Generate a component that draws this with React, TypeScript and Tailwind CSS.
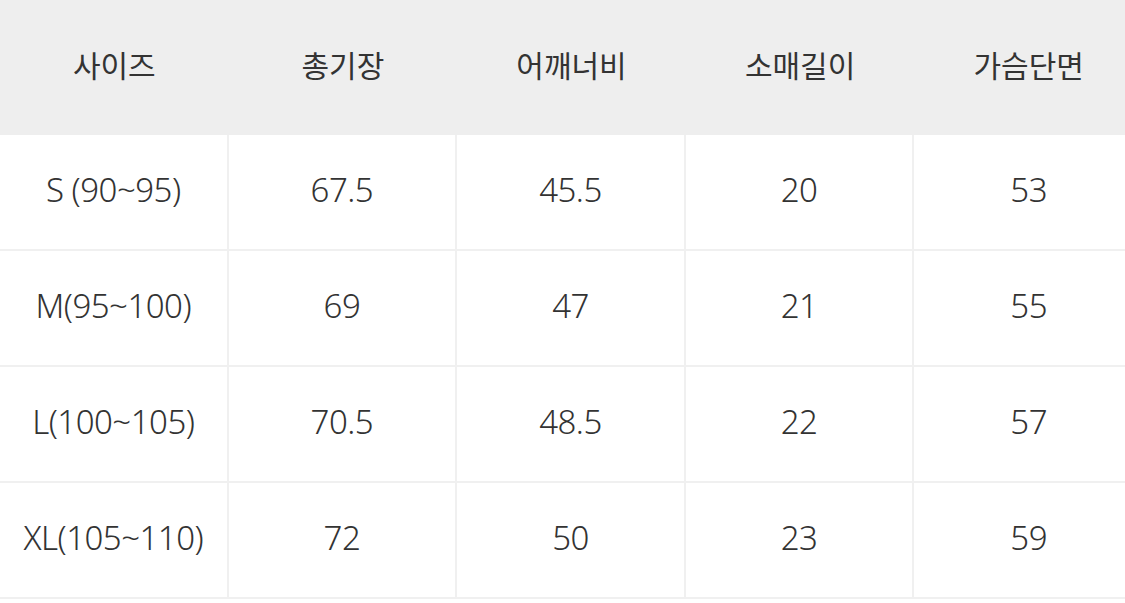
import React from 'react'

const headers = ['사이즈', '총기장', '어깨너비', '소매길이', '가슴단면']

const rows = [
  ['S (90~95)', '67.5', '45.5', '20', '53'],
  ['M(95~100)', '69', '47', '21', '55'],
  ['L(100~105)', '70.5', '48.5', '22', '57'],
  ['XL(105~110)', '72', '50', '23', '59'],
]

export default function App() {
  return (
    <div
      className="w-[1125px] h-[603px] overflow-hidden bg-white text-[#333333]"
      style={{ fontFamily: '"Noto Sans", "Noto Sans CJK KR", sans-serif' }}
    >
      <div className="w-[1143px]">
        <div className="grid grid-cols-5 h-[135px] bg-[#eeeeee]">
          {headers.map((h) => (
            <div key={h} className="flex items-center justify-center pb-[5px] text-[30px]">
              {h}
            </div>
          ))}
        </div>
        {rows.map((r, i) => (
          <div key={i} className="grid grid-cols-5 h-[116px] border-b-2 border-[#f0f0f0]">
            {r.map((c, j) => (
              <div
                key={j}
                className={
                  'flex items-center justify-center pb-[4px] text-[33px] font-light tracking-[-0.5px] ' +
                  (j < 4 ? 'border-r-2 border-[#f0f0f0]' : '')
                }
              >
                {c}
              </div>
            ))}
          </div>
        ))}
      </div>
    </div>
  )
}
